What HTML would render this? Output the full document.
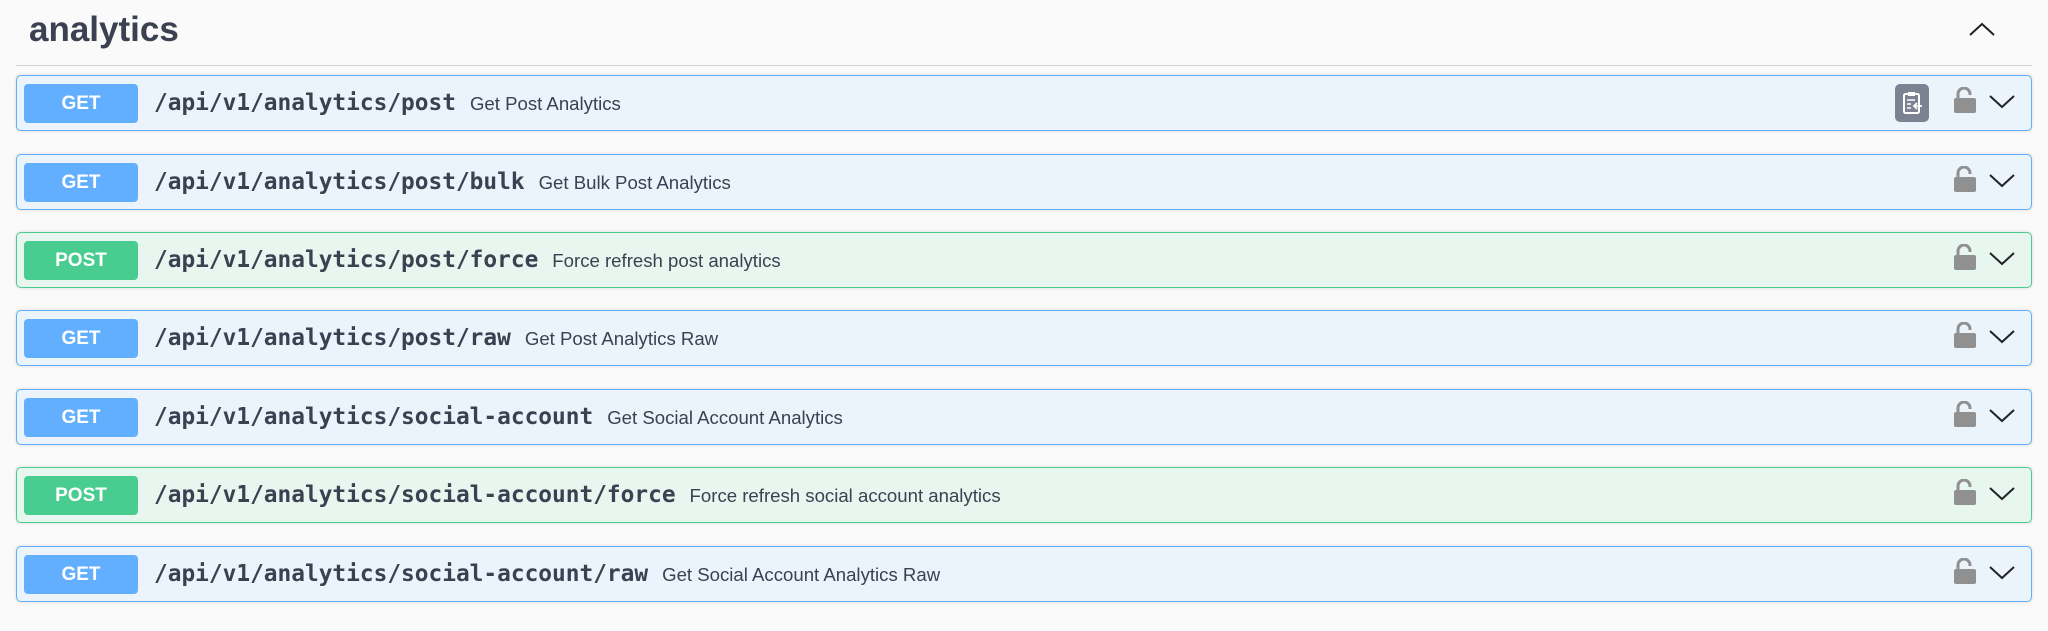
<!DOCTYPE html>
<html><head><meta charset="utf-8"><style>
*{margin:0;padding:0;box-sizing:border-box}
body{width:2048px;height:631px;background:#fafafa;font-family:"Liberation Sans",sans-serif;position:relative;overflow:hidden}
h3{position:absolute;left:29px;top:10px;font-size:35px;font-weight:bold;color:#3b4151}
.line{position:absolute;left:16px;right:16px;top:65px;height:1px;background:#cfd2d6}
.top{position:absolute;left:1968px;top:20px}
.row{position:absolute;left:16px;width:2016px;height:56px;border:1px solid #61affe;border-radius:5px;background:#ebf3fb;box-shadow:0 0 3px rgba(0,0,0,.15)}
.row.post{border-color:#49cc90;background:#e8f6f0}
.badge{position:absolute;left:7px;top:8px;width:114px;height:39px;border-radius:4px;background:#61affe;color:#fff;font-weight:bold;font-size:19px;text-align:center;line-height:39px}
.post .badge{background:#49cc90}
.path{position:absolute;left:137px;top:0;line-height:54px;font-family:"DejaVu Sans Mono","Liberation Mono",monospace;font-weight:bold;font-size:22.8px;color:#3b4151;white-space:nowrap}
.path span{font-family:"Liberation Sans",sans-serif;font-weight:normal;font-size:18.6px;margin-left:14px}
.lock{position:absolute;left:1936px;top:11px}
.chev{position:absolute;left:1972px;top:18px}
.copy{position:absolute;left:1878px;top:8px;width:34px;height:38px;border-radius:5px;background:#7d8293}
</style></head><body>
<h3>analytics</h3>
<div class="line"></div>
<svg class="top" width="28" height="18" viewBox="0 0 28 18"><path d="M2 15 L14 4 L26 15" fill="none" stroke="#222" stroke-width="2"/></svg>

<div class="row" style="top:75px"><div class="badge">GET</div><div class="path">/api/v1/analytics/post<span>Get Post Analytics</span></div>
<div class="copy"><svg width="34" height="38" viewBox="0 0 34 38"><rect x="9" y="10" width="15" height="19" rx="1.5" fill="none" stroke="#fff" stroke-width="2"/><rect x="13" y="8" width="7" height="4" fill="#fff"/><path d="M12 16h8M12 20h4M12 24h4" stroke="#fff" stroke-width="1.6"/><path d="M27 22h-8M22 19l-3 3 3 3" fill="none" stroke="#fff" stroke-width="1.8"/></svg></div>
<svg class="lock" width="24" height="26" viewBox="0 0 24 26"><path d="M5 12V7a6 6 0 0 1 12 0v1" fill="none" stroke="#909090" stroke-width="3"/><rect x="1" y="11" width="22" height="15" rx="2" fill="#909090"/></svg>
<svg class="chev" width="26" height="16" viewBox="0 0 26 16"><path d="M1 2 L13 13 L25 2" fill="none" stroke="#222" stroke-width="2"/></svg></div>

<div class="row" style="top:154px"><div class="badge">GET</div><div class="path">/api/v1/analytics/post/bulk<span>Get Bulk Post Analytics</span></div>
<svg class="lock" width="24" height="26" viewBox="0 0 24 26"><path d="M5 12V7a6 6 0 0 1 12 0v1" fill="none" stroke="#909090" stroke-width="3"/><rect x="1" y="11" width="22" height="15" rx="2" fill="#909090"/></svg>
<svg class="chev" width="26" height="16" viewBox="0 0 26 16"><path d="M1 2 L13 13 L25 2" fill="none" stroke="#222" stroke-width="2"/></svg></div>

<div class="row post" style="top:232px"><div class="badge">POST</div><div class="path">/api/v1/analytics/post/force<span>Force refresh post analytics</span></div>
<svg class="lock" width="24" height="26" viewBox="0 0 24 26"><path d="M5 12V7a6 6 0 0 1 12 0v1" fill="none" stroke="#909090" stroke-width="3"/><rect x="1" y="11" width="22" height="15" rx="2" fill="#909090"/></svg>
<svg class="chev" width="26" height="16" viewBox="0 0 26 16"><path d="M1 2 L13 13 L25 2" fill="none" stroke="#222" stroke-width="2"/></svg></div>

<div class="row" style="top:310px"><div class="badge">GET</div><div class="path">/api/v1/analytics/post/raw<span>Get Post Analytics Raw</span></div>
<svg class="lock" width="24" height="26" viewBox="0 0 24 26"><path d="M5 12V7a6 6 0 0 1 12 0v1" fill="none" stroke="#909090" stroke-width="3"/><rect x="1" y="11" width="22" height="15" rx="2" fill="#909090"/></svg>
<svg class="chev" width="26" height="16" viewBox="0 0 26 16"><path d="M1 2 L13 13 L25 2" fill="none" stroke="#222" stroke-width="2"/></svg></div>

<div class="row" style="top:389px"><div class="badge">GET</div><div class="path">/api/v1/analytics/social-account<span>Get Social Account Analytics</span></div>
<svg class="lock" width="24" height="26" viewBox="0 0 24 26"><path d="M5 12V7a6 6 0 0 1 12 0v1" fill="none" stroke="#909090" stroke-width="3"/><rect x="1" y="11" width="22" height="15" rx="2" fill="#909090"/></svg>
<svg class="chev" width="26" height="16" viewBox="0 0 26 16"><path d="M1 2 L13 13 L25 2" fill="none" stroke="#222" stroke-width="2"/></svg></div>

<div class="row post" style="top:467px"><div class="badge">POST</div><div class="path">/api/v1/analytics/social-account/force<span>Force refresh social account analytics</span></div>
<svg class="lock" width="24" height="26" viewBox="0 0 24 26"><path d="M5 12V7a6 6 0 0 1 12 0v1" fill="none" stroke="#909090" stroke-width="3"/><rect x="1" y="11" width="22" height="15" rx="2" fill="#909090"/></svg>
<svg class="chev" width="26" height="16" viewBox="0 0 26 16"><path d="M1 2 L13 13 L25 2" fill="none" stroke="#222" stroke-width="2"/></svg></div>

<div class="row" style="top:546px"><div class="badge">GET</div><div class="path">/api/v1/analytics/social-account/raw<span>Get Social Account Analytics Raw</span></div>
<svg class="lock" width="24" height="26" viewBox="0 0 24 26"><path d="M5 12V7a6 6 0 0 1 12 0v1" fill="none" stroke="#909090" stroke-width="3"/><rect x="1" y="11" width="22" height="15" rx="2" fill="#909090"/></svg>
<svg class="chev" width="26" height="16" viewBox="0 0 26 16"><path d="M1 2 L13 13 L25 2" fill="none" stroke="#222" stroke-width="2"/></svg></div>
</body></html>
